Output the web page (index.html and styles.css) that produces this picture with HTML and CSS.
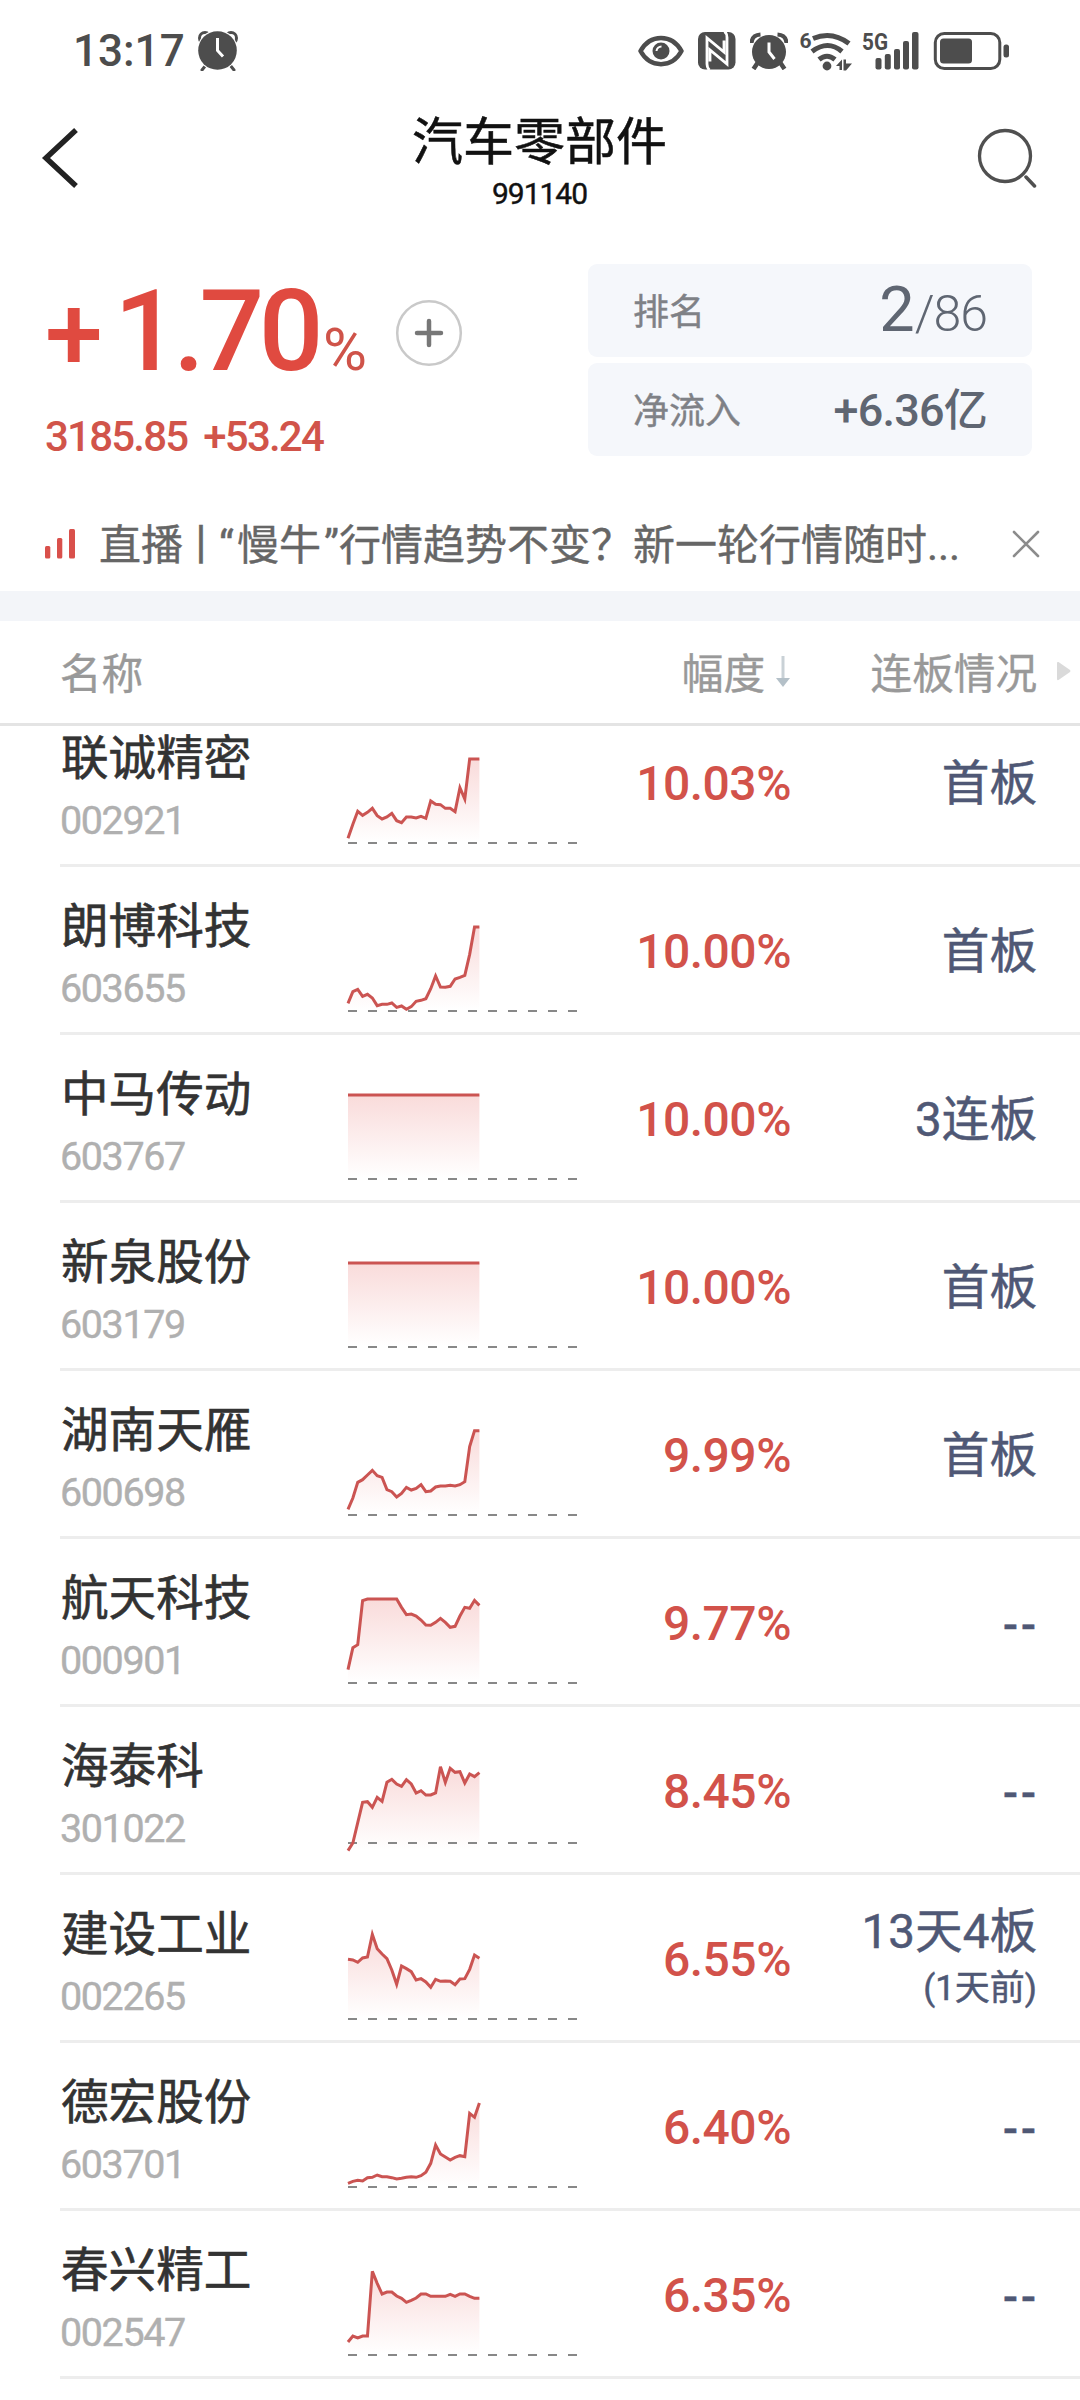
FILE: index.html
```html
<!DOCTYPE html>
<html lang="zh-CN">
<head>
<meta charset="utf-8">
<title>汽车零部件</title>
<link rel="stylesheet" href="styles.css">
</head>
<body>
<div class="screen">
  <header class="status">
    <span class="status-time">13:17</span>
    <svg class="ic-alarm-lg" width="40" height="40" viewBox="198 32 40 40">
      <g fill="none" stroke="#4d4d4d" stroke-width="3">
        <circle cx="205" cy="39" r="5.5"/><circle cx="231" cy="39" r="5.5"/>
        <path d="M206 66l-4 5M230 66l4 5" stroke-linecap="round"/>
      </g>
      <circle cx="217.5" cy="51.5" r="20.5" fill="#fff"/>
      <circle cx="217.5" cy="51.5" r="19.3" fill="#4d4d4d"/>
      <path d="M217.5 39v12.500l5.500 6" fill="none" stroke="#fff" stroke-width="3"/>
    </svg>
    <div class="status-icons">
      <svg width="46" height="32" viewBox="638 36 46 32">
        <path d="M640.500 52C650 34.500 672 34.500 681.500 52C672 69.500 650 69.500 640.500 52Z" fill="none" stroke="#4d4d4d" stroke-width="4.500" stroke-linejoin="round"/>
        <circle cx="661" cy="52" r="8.500" fill="#4d4d4d"/>
        <path d="M656.500 52a5 5 0 0 1 5-4.500" fill="none" stroke="#fff" stroke-width="2"/>
      </svg>
      <svg class="ic-nfc" width="38" height="38" viewBox="698 32.500 38 38">
        <rect x="698" y="32.500" width="37.500" height="37.500" rx="7" fill="#4d4d4d"/>
        <path fill="none" stroke="#fff" stroke-width="2.800" d="M709.500 70.500q-2.500-2-2.500-6V38.500l17 14V41M724.500 32q2.500 2 2.500 6v26.500l-17-14V62"/>
      </svg>
      <svg class="ic-alarm" width="38" height="38" viewBox="749.500 33 38 38">
        <g fill="none" stroke="#4d4d4d" stroke-width="4">
          <path d="M751 44q.500-8 9-8.500M786 44q-.500-8-9-8.500"/>
          <path d="M757 64l-4 6M780 64l4 6" stroke-width="4.500"/>
        </g>
        <circle cx="768.500" cy="53" r="17" fill="#4d4d4d"/>
        <path d="M768.500 43.500v9.500l5.500 7" fill="none" stroke="#fff" stroke-width="3"/>
      </svg>
      <svg class="ic-wifi" width="54" height="44" viewBox="799 28 54 44">
        <text class="mini" x="799.500" y="46.500" font-size="21">6</text>
        <g fill="none" stroke="#4d4d4d" stroke-width="5">
          <path d="M813 37.500q19-8 36 5"/><path d="M812 50.500q16-12 30 0"/><path d="M819 58.500q8-6.500 16 0"/>
        </g>
        <circle cx="827" cy="65" r="4.400" fill="#4d4d4d"/>
        <path fill="#4d4d4d" d="M836 65l6-6.500V69h-2.500v-4ZM843.500 58.500h2.500v4h6l-6 7h-2.500Z"/>
      </svg>
      <svg class="ic-signal" width="58" height="48" viewBox="861 27 58 48">
        <text class="mini" x="862" y="50" font-size="24" textLength="26" lengthAdjust="spacingAndGlyphs">5G</text>
        <g fill="#4d4d4d">
          <rect x="875.500" y="58" width="6" height="11.500" rx="2"/><rect x="884.800" y="54" width="6" height="15.500" rx="2"/>
          <rect x="894" y="49" width="6" height="20.500" rx="2"/><rect x="903" y="41" width="6" height="28.500" rx="2"/>
          <rect x="912" y="32" width="6.500" height="37.500" rx="2"/>
        </g>
      </svg>
      <svg class="ic-battery" width="77" height="38" viewBox="933 31.500 77 38">
        <rect x="935.300" y="33" width="64.500" height="35" rx="9" fill="none" stroke="#4d4d4d" stroke-width="3"/>
        <rect x="940" y="38" width="32" height="25" rx="3.500" fill="#4d4d4d"/>
        <rect x="1003.500" y="44" width="5.500" height="13" rx="2.500" fill="#4d4d4d"/>
      </svg>
    </div>
  </header>

  <nav class="navbar">
    <svg width="60" height="64" viewBox="40 127 60 64"><path d="M76 131L46 159l30 28" fill="none" stroke="#222" stroke-width="5.500"/></svg>
    <div class="nav-title">
      <h1>汽车零部件</h1>
      <p>991140</p>
    </div>
    <svg width="60" height="60" viewBox="977 128 60 60">
      <circle cx="1005" cy="156" r="25.500" fill="none" stroke="#505050" stroke-width="3.300"/>
      <path d="M1026 177l8.500 9" stroke="#505050" stroke-width="3.500" stroke-linecap="round"/>
    </svg>
  </nav>

  <section class="summary">
    <div class="quote">
      <div class="quote-main">
        <span class="sign">+</span><span class="change">1.70</span><span class="unit">%</span>
        <svg class="add" width="68" height="68" viewBox="0 0 68 68">
          <circle cx="34" cy="34" r="31.800" fill="none" stroke="#c9c9c9" stroke-width="2.500"/>
          <path d="M22 34h24M34 22v24" stroke="#777" stroke-width="4.500" stroke-linecap="round"/>
        </svg>
      </div>
      <div class="quote-sub"><span>3185.85</span><span>+53.24</span></div>
    </div>
    <div class="stats">
      <div class="stat"><span class="stat-label">排名</span><span class="rank"><b>2</b><i>/86</i></span></div>
      <div class="stat"><span class="stat-label">净流入</span><span class="inflow">+6.36<em>亿</em></span></div>
    </div>
  </section>

  <section class="news">
    <svg width="32" height="32" viewBox="44 528 32 32" fill="#d9504b">
      <rect x="45" y="546" width="5.300" height="12.500" rx="1.500"/><rect x="57" y="538" width="5.300" height="20.500" rx="1.500"/><rect x="69" y="529" width="6" height="29.500" rx="1.500"/>
    </svg>
    <p class="news-text">直播<span class="bar">丨</span><span class="q open">“</span>慢牛<span class="q close">”</span>行情趋势不变&#xFF1F;新一轮行情随时<span class="q">...</span></p>
    <svg width="30" height="30" viewBox="0 0 30 30"><path d="M3 3l24 24M27 3L3 27" stroke="#8c8c8c" stroke-width="2.600" stroke-linecap="round"/></svg>
  </section>

  <div class="table-head">
    <span class="col-name">名称</span>
    <span class="col-pct">幅度<svg width="14" height="31" viewBox="0 0 14 31"><path d="M7 0v24" stroke="#c9d1d6" stroke-width="3"/><path d="M0 22h14L7 31Z" fill="#b4c0c8"/></svg></span>
    <span class="col-board">连板情况</span>
    <svg class="more" width="15" height="20" viewBox="0 0 15 20"><path d="M1 2v16q0 1.500 1.500 1L14 11q1-1 0-2L2.500 1Q1 .500 1 2Z" fill="#dadada"/></svg>
  </div>

  <main class="list">
    <div class="row"><div class="stock"><h2>联诚精密</h2><p>002921</p></div><svg class="spark" data-points="14,56,95,83,92,104,82,72,78,89,67,61,78,78,75,80,74,126,116,115,104,104,94,166,132,252,252,252"></svg><span class="pct">10.03%</span><div class="board"><span>首板</span></div></div>
    <div class="row"><div class="stock"><h2>朗博科技</h2><p>603655</p></div><svg class="spark" data-points="23,58,65,44,50,39,16,20,20,24,11,15,5,13,29,32,37,67,105,72,71,74,96,101,107,170,252,252"></svg><span class="pct">10.00%</span><div class="board"><span>首板</span></div></div>
    <div class="row"><div class="stock"><h2>中马传动</h2><p>603767</p></div><svg class="spark" data-points="252,252,252,252,252,252,252,252,252,252,252,252,252,252,252,252,252,252,252,252,252,252,252,252,252,252,252,252"></svg><span class="pct">10.00%</span><div class="board"><span>3连板</span></div></div>
    <div class="row"><div class="stock"><h2>新泉股份</h2><p>603179</p></div><svg class="spark" data-points="252,252,252,252,252,252,252,252,252,252,252,252,252,252,252,252,252,252,252,252,252,252,252,252,252,252,252,252"></svg><span class="pct">10.00%</span><div class="board"><span>首板</span></div></div>
    <div class="row"><div class="stock"><h2>湖南天雁</h2><p>600698</p></div><svg class="spark" data-points="17,51,98,106,120,134,118,113,76,70,54,65,83,75,80,91,70,72,84,87,87,89,87,91,100,205,253,253"></svg><span class="pct">9.99%</span><div class="board"><span>首板</span></div></div>
    <div class="row"><div class="stock"><h2>航天科技</h2><p>000901</p></div><svg class="spark" data-points="40,106,115,247,252,252,252,252,252,252,252,227,205,207,201,189,174,173,182,194,182,167,170,201,227,224,248,233"></svg><span class="pct">9.77%</span><div class="board"><span class="none">--</span></div></div>
    <div class="row"><div class="stock"><h2>海泰科</h2><p>301022</p></div><svg class="spark" data-zero="24" data-points="1,24,85,146,148,131,161,149,206,215,201,194,214,201,174,181,168,168,174,253,206,248,236,238,204,231,223,235"></svg><span class="pct">8.45%</span><div class="board"><span class="none">--</span></div></div>
    <div class="row"><div class="stock"><h2>建设工业</h2><p>002265</p></div><svg class="spark" data-points="179,177,170,183,186,254,211,195,181,147,104,159,151,142,117,121,111,95,119,113,114,113,103,120,121,149,192,182"></svg><span class="pct">6.55%</span><div class="board"><span>13天4板</span><small>(1天前)</small></div></div>
    <div class="row"><div class="stock"><h2>德宏股份</h2><p>603701</p></div><svg class="spark" data-points="11,17,20,18,28,29,36,31,31,28,24,26,29,31,29,34,44,71,126,99,90,81,89,94,91,221,209,252"></svg><span class="pct">6.40%</span><div class="board"><span class="none">--</span></div></div>
    <div class="row"><div class="stock"><h2>春兴精工</h2><p>002547</p></div><svg class="spark" data-points="39,57,51,57,57,251,215,183,189,189,177,170,158,164,171,183,183,176,176,176,176,182,176,183,183,176,170,170"></svg><span class="pct">6.35%</span><div class="board"><span class="none">--</span></div></div>
  </main>
</div>
<svg width="0" height="0" class="defs"><defs>
  <linearGradient id="fade" gradientUnits="userSpaceOnUse" x1="0" y1="30" x2="0" y2="278">
    <stop offset="0" stop-color="#e0413d" stop-opacity=".19"/><stop offset="1" stop-color="#e0413d" stop-opacity="0"/>
  </linearGradient>
</defs></svg>
<script src="script.js"></script>
</body>
</html>
```
FILE: styles.css
```css
* { box-sizing: border-box; margin: 0; padding: 0; }
body { background: #fff; font-family: Roboto, "Noto Sans CJK SC", sans-serif; color: #111; }
svg { display: block; flex: none; }
.defs { position: absolute; }
.screen { width: 1080px; height: 2400px; overflow: hidden; background: #fff; }

.status { height: 102px; display: flex; align-items: center; padding-left: 73px; color: #4d4d4d; }
.status-time { width: 125px; font-size: 44px; line-height: 102px; font-weight: 500; }
.status-icons { margin-left: 400px; display: flex; align-items: center; }
.ic-nfc { margin-left: 14px; }
.ic-alarm { margin-left: 13.5px; }
.ic-wifi { margin-left: 11.5px; }
.ic-signal { margin-left: 8px; }
.ic-battery { margin-left: 14px; }
.mini { font-family: Roboto, sans-serif; font-weight: 700; fill: #4d4d4d; }

.navbar { height: 126px; padding: 0 43px 14px 40px; display: flex; justify-content: space-between; align-items: center; }
.nav-title { text-align: center; padding: 3px 0 0 2px; }
.nav-title h1 { font-size: 51px; line-height: 70px; font-weight: 400; -webkit-text-stroke: .5px #111; }
.nav-title p { font-size: 30px; line-height: 34px; margin-top: -1px; letter-spacing: -1px; -webkit-text-stroke: .4px #111; }

.summary { height: 274px; padding: 36px 48px 0 45px; display: flex; justify-content: space-between; }
.quote { color: #e04a40; }
.quote-main { height: 134px; display: flex; align-items: baseline; }
.sign { width: 65px; font-size: 104px; line-height: 134px; font-weight: 500; }
.change { width: 213px; font-size: 114px; line-height: 134px; font-weight: 500; letter-spacing: -5.5px; padding-left: 4px; }
.unit { font-size: 60px; width: 72px; color: #cf5349; }
.add { align-self: flex-start; margin-top: 35px; }
.quote-sub { display: flex; gap: 16px; margin-top: 14px; font-size: 42px; line-height: 50px; font-weight: 500; letter-spacing: -1.8px; color: #d1544a; }
.stats { width: 444px; display: flex; flex-direction: column; gap: 6px; }
.stat { height: 93px; border-radius: 9px; background: #f5f7fb; padding: 0 45px 0 45px; display: flex; align-items: center; justify-content: space-between; color: #5f6672; }
.stat-label { font-size: 36px; color: #7f8186; padding-bottom: 4px; -webkit-text-stroke: .4px #7f8186; }
.rank { display: flex; align-items: baseline; line-height: 93px; padding-top: 3px; }
.rank b { font-size: 63px; font-weight: 400; }
.rank i { font-size: 50px; font-weight: 300; font-style: normal; letter-spacing: -1px; }
.inflow { font-size: 45px; font-weight: 500; line-height: 60px; letter-spacing: -.8px; padding-top: 2px; }
.inflow em { font-size: 44px; font-style: normal; font-weight: 500; }

.news { height: 89px; padding: 0 39px 6px 44px; display: flex; align-items: center; color: #666; }
.news-text { margin-left: 23px; width: 912px; font-size: 42px; line-height: 60px; white-space: nowrap; font-family: "Noto Sans CJK SC", sans-serif; -webkit-text-stroke: .4px #666; }
.bar { margin: 0 -3px; }
.q { font-family: Roboto, sans-serif; }
.open { margin-right: 3px; }
.close { margin-left: 3px; }

.table-head { height: 135px; border-top: 30px solid #f3f5f9; border-bottom: 3px solid #e4e4e4; padding: 0 0 2px 60px; display: flex; align-items: center; font-size: 41.6px; color: #999; -webkit-text-stroke: .4px #999; }
.col-name { width: 281px; }
.col-pct { width: 449px; display: flex; justify-content: flex-end; align-items: center; gap: 11px; }
.col-board { width: 247px; text-align: right; }
.more { margin-left: 19px; }

.list { height: 1674px; overflow: hidden; }
.row { height: 168px; margin-left: 60px; border-bottom: 3px solid #ededed; display: flex; }
.row:first-child { margin-top: -27px; }
.stock { width: 288px; padding-top: 25px; }
.stock h2 { font-size: 47.6px; line-height: 70px; font-weight: 400; color: #333; padding-left: 1px; -webkit-text-stroke: .6px #333; }
.stock p { font-size: 39.5px; line-height: 46px; margin-top: 4px; color: #b0b0b0; letter-spacing: -1.4px; -webkit-text-stroke: .4px #b0b0b0; }
.spark { width: 230px; height: 110px; margin-top: 50px; overflow: visible; }
.pct { width: 213px; display: flex; justify-content: flex-end; align-items: center; white-space: nowrap; font-size: 48px; font-weight: 500; letter-spacing: -.5px; color: #d2524a; padding-top: 4px; }
.board { width: 246px; display: flex; flex-direction: column; justify-content: center; align-items: flex-end; font-size: 47.6px; line-height: 56px; color: #4f5875; font-weight: 400; -webkit-text-stroke: .5px #4f5875; padding-top: 4px; }
.board small { font-size: 35px; line-height: 54px; padding-top: 2px; }
.none { font-size: 44px; letter-spacing: 3px; margin-right: -2px; font-weight: 500; padding-top: 3px; }
```
FILE: script.js
```js
// Intraday sparklines: each value is a height above the chart floor, in thirds of a pixel.
const FLOOR = 282;
const STEP = 14.6;

document.querySelectorAll('.spark').forEach((svg) => {
  const heights = svg.dataset.points.split(',').map(Number);
  const zero = FLOOR - Number(svg.dataset.zero || 0);
  const points = heights.map((h, i) => `${(i * STEP).toFixed(1)},${FLOOR - h}`).join(' ');
  const right = (heights.length - 1) * STEP;
  svg.setAttribute('viewBox', '0 0 690 330');
  svg.innerHTML =
    `<polygon points="0,${FLOOR} ${points} ${right},${FLOOR}" fill="url(#fade)"/>` +
    `<path d="M0 ${zero}H690" stroke="#888" stroke-width="6" stroke-dasharray="27 33"/>` +
    `<polyline points="${points}" fill="none" stroke="#cb5452" stroke-width="9"/>`;
});
```
